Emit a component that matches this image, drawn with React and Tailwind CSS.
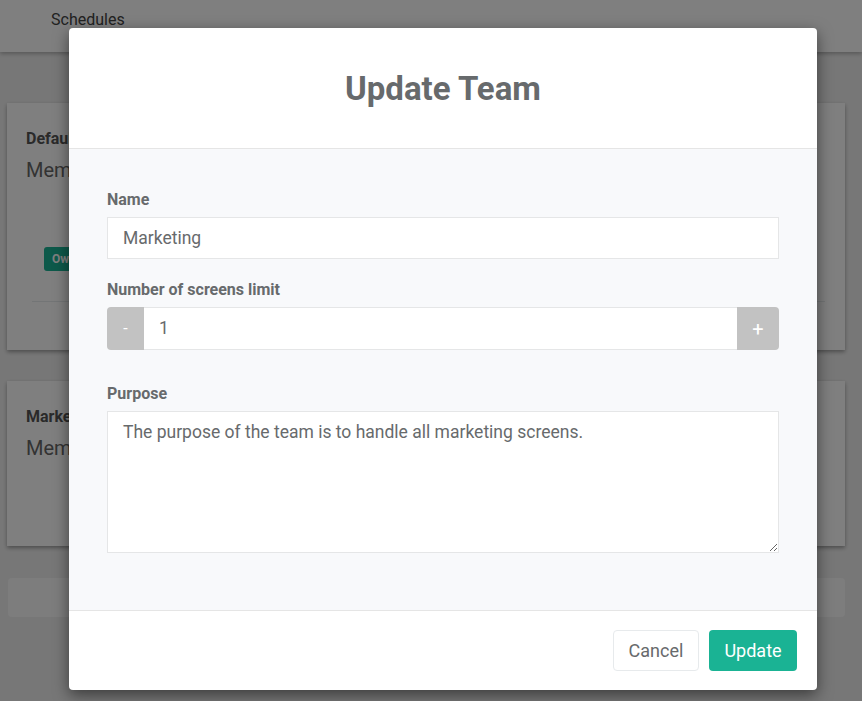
import { useState } from 'react'

function BackgroundPage() {
  return (
    <div className="min-h-[701px] bg-[#efefef]">
      <div className="h-[52px] bg-white shadow-[0_2px_4px_rgba(0,0,0,0.25)] flex items-center pl-[51px]">
        <span className="text-[16px] text-[#444] -mt-[12px]">Schedules</span>
      </div>
      <div className="px-[7px] pt-[51px] pr-[17px]">
        <div className="bg-white h-[247px] shadow-[0_2px_4px_rgba(0,0,0,0.35)] pt-[24px] pl-[19px] pr-[20px]">
          <div className="font-bold text-[16px] text-[#555]">Default</div>
          <div className="text-[20px] text-[#666] mt-[4px]">Members: 3</div>
          <div className="mt-[62px] ml-[18px] inline-block rounded-[3px] bg-[#1ab394] text-white text-[12px] font-bold px-[8px] py-[3px]">Owner</div>
          <div className="mt-[30px] ml-[6px] border-t border-[#e7eaec]" />
        </div>
        <div className="bg-white h-[165px] mt-[31px] shadow-[0_2px_4px_rgba(0,0,0,0.35)] pt-[24px] pl-[19px]">
          <div className="font-bold text-[16px] text-[#555]">Marketing</div>
          <div className="text-[20px] text-[#666] mt-[4px]">Members: 1</div>
        </div>
        <div className="bg-[#fafafa] h-[39px] mt-[32px] ml-[1px] rounded-[4px]" />
      </div>
    </div>
  )
}

function Field({ label, children, className = '' }) {
  return (
    <div className={className}>
      <label className="block text-[16px] font-bold text-[#676a6c] leading-[20px] mb-[7px]">{label}</label>
      {children}
    </div>
  )
}

export default function App() {
  const [name, setName] = useState('Marketing')
  const [limit, setLimit] = useState(1)
  const [purpose, setPurpose] = useState('The purpose of the team is to handle all marketing screens.')

  return (
    <div className="relative w-[862px] h-[701px] overflow-hidden" style={{ fontFamily: 'Roboto, "Open Sans", sans-serif' }}>
      <BackgroundPage />
      <div className="absolute inset-0 bg-black/50" />

      <div className="absolute left-[69px] top-[28px] w-[748px] bg-white rounded-[4px] shadow-[0_5px_15px_rgba(0,0,0,0.5)] overflow-hidden">
        <div className="h-[121px] flex items-center justify-center border-b border-[#e5e5e5]">
          <h2 className="text-[33px] font-bold text-[#676a6c] mt-[1px]">Update Team</h2>
        </div>

        <div className="bg-[#f8f9fb] pt-[41px] pb-[57px] px-[38px]">
          <Field label="Name">
            <input
              value={name}
              onChange={e => setName(e.target.value)}
              className="w-full h-[42px] border border-[#e5e6e7] bg-white px-[15px] text-[17.5px] text-[#676a6c] outline-none"
            />
          </Field>

          <Field label="Number of screens limit" className="mt-[21px]">
            <div className="flex h-[43px]">
              <button
                onClick={() => setLimit(l => Math.max(0, l - 1))}
                className="w-[37px] bg-[#c2c2c2] text-white text-[16px] rounded-l-[4px]"
              >
                -
              </button>
              <input
                value={limit}
                onChange={e => setLimit(e.target.value)}
                className="flex-1 min-w-0 border-y border-[#e5e6e7] bg-white px-[15px] text-[17.5px] text-[#676a6c] outline-none"
              />
              <button
                onClick={() => setLimit(l => Number(l) + 1)}
                className="w-[42px] bg-[#c2c2c2] text-white text-[20px] rounded-r-[4px]"
              >
                +
              </button>
            </div>
          </Field>

          <Field label="Purpose" className="mt-[34px]">
            <textarea
              value={purpose}
              onChange={e => setPurpose(e.target.value)}
              className="block w-full h-[142px] border border-[#e5e6e7] bg-white px-[15px] py-[7px] text-[17.5px] text-[#676a6c] outline-none resize-y"
            />
          </Field>
        </div>

        <div className="h-[80px] border-t border-[#e5e5e5] flex items-center justify-end gap-[10px] pr-[20px]">
          <button className="h-[41px] w-[86px] border border-[#e7eaec] rounded-[4px] bg-white text-[18px] text-[#676a6c]">Cancel</button>
          <button className="h-[41px] w-[88px] rounded-[4px] bg-[#1ab394] text-[18px] text-white">Update</button>
        </div>
      </div>
    </div>
  )
}
